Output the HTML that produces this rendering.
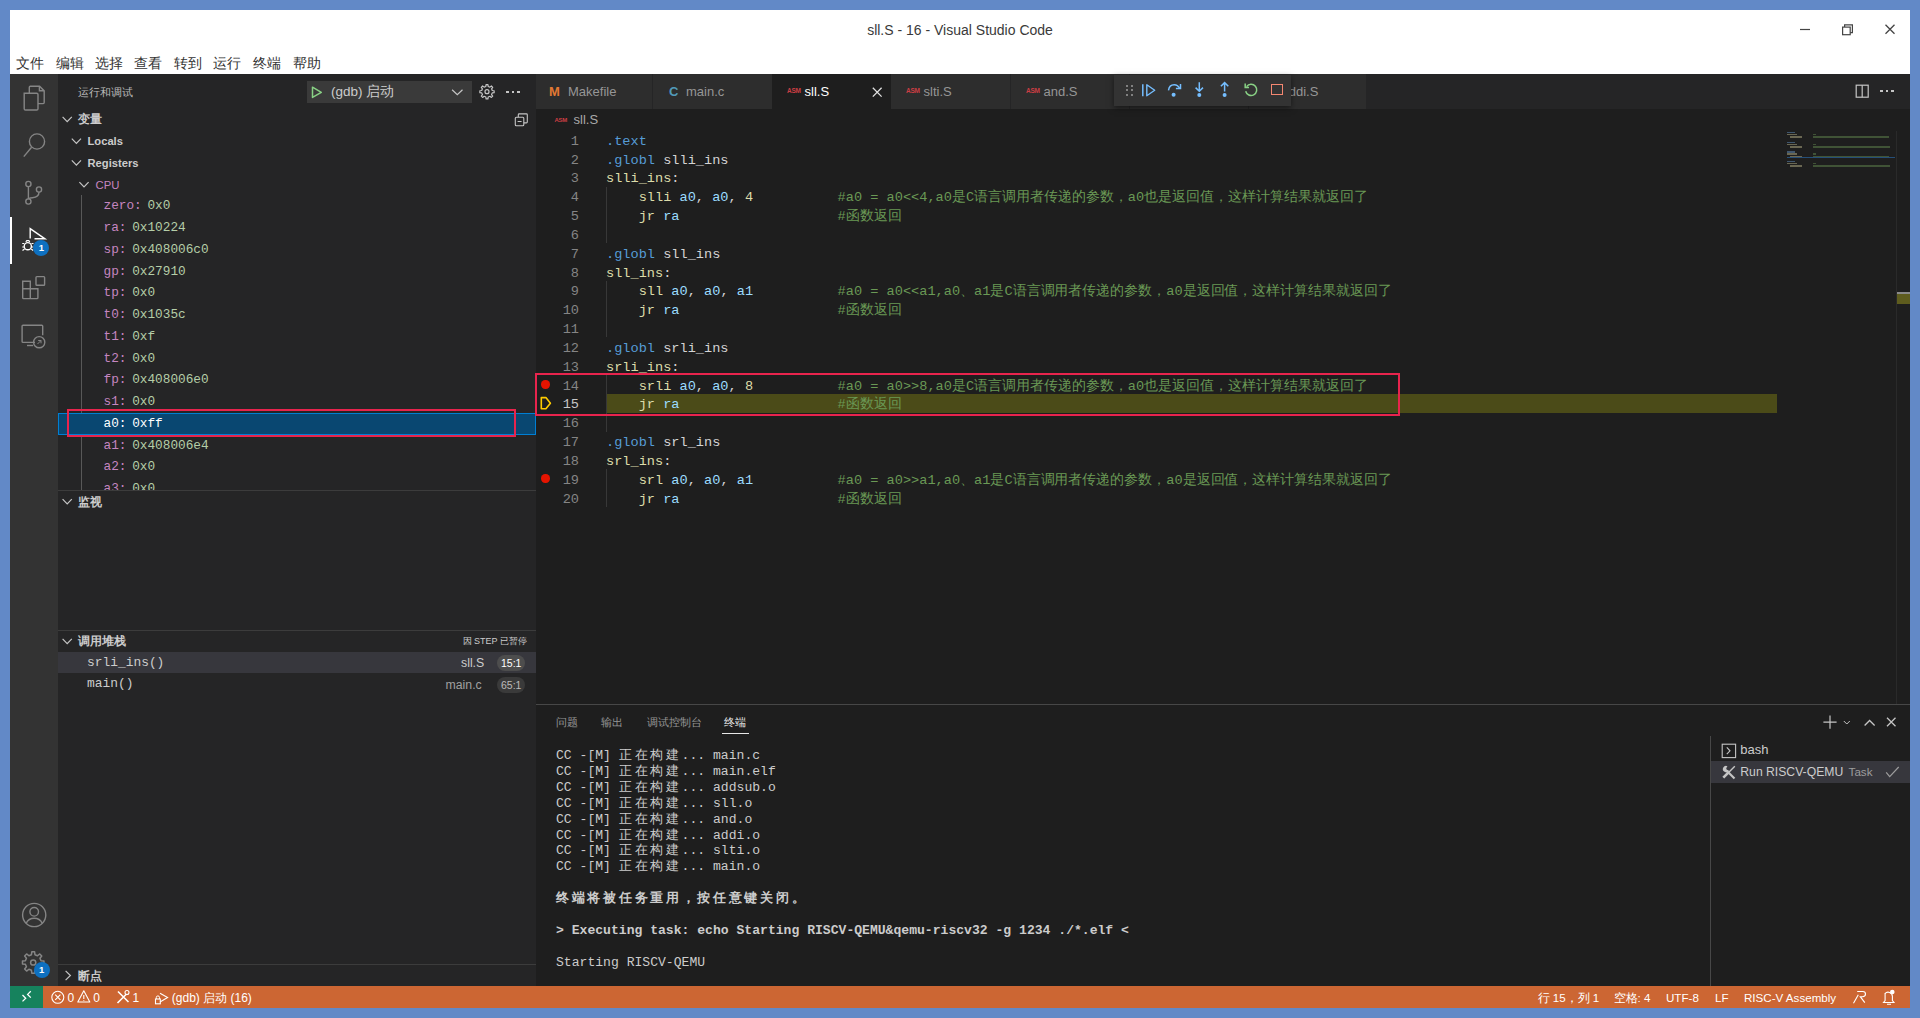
<!DOCTYPE html><html><head><meta charset="utf-8"><style>
*{margin:0;padding:0;box-sizing:border-box}
html,body{width:1920px;height:1018px;overflow:hidden;background:#6289c7;font-family:"Liberation Sans",sans-serif}
.a{position:absolute}
.t{white-space:pre;line-height:22px}
svg{position:absolute;overflow:visible}
.menu{top:54px;font-size:14px;color:#333;white-space:pre;line-height:18px}
</style></head><body>
<div class="a" style="left:10px;top:10px;width:1900px;height:64px;background:#fff"></div>
<div class="a t" style="left:10px;top:19px;width:1900px;text-align:center;font-size:14px;color:#3a3a3a">sll.S - 16 - Visual Studio Code</div>
<div class="a menu" style="left:16px">文件</div>
<div class="a menu" style="left:56px">编辑</div>
<div class="a menu" style="left:95px">选择</div>
<div class="a menu" style="left:134px">查看</div>
<div class="a menu" style="left:174px">转到</div>
<div class="a menu" style="left:213px">运行</div>
<div class="a menu" style="left:253px">终端</div>
<div class="a menu" style="left:293px">帮助</div>
<svg style="left:1800px;top:24px" width="14" height="14"><line x1="0" y1="5.5" x2="10" y2="5.5" stroke="#444" stroke-width="1.2"/></svg>
<svg style="left:1842px;top:24px" width="14" height="14"><rect x="0.6" y="3.1" width="7.6" height="7.6" fill="none" stroke="#444" stroke-width="1.2"/><path d="M2.6 3.1V0.9H10.4V8.7H8.2" fill="none" stroke="#444" stroke-width="1.2"/></svg>
<svg style="left:1885px;top:24px" width="14" height="14"><path d="M0.5 0.8L9.5 9.8M9.5 0.8L0.5 9.8" stroke="#444" stroke-width="1.3"/></svg>
<div class="a" style="left:10px;top:74px;width:48px;height:912px;background:#333333"></div>
<div class="a" style="left:58px;top:74px;width:478px;height:912px;background:#252526"></div>
<div class="a" style="left:536px;top:74px;width:1374px;height:912px;background:#1e1e1e"></div>
<svg style="left:0;top:0" width="1" height="1"><path d="M24.2 93.2h12.5c0.8 0 1.3 0.5 1.3 1.3v14.2c0 0.8-0.5 1.3-1.3 1.3h-11.2c-0.8 0-1.3-0.5-1.3-1.3z" fill="none" stroke="#858585" stroke-width="1.4"/><path d="M29.3 93.2v-5.9c0-0.6 0.4-1 1-1h9.3l4.6 4.6v11.7c0 0.6-0.4 1-1 1h-5.2" fill="none" stroke="#858585" stroke-width="1.4"/><path d="M39.4 86.5v4.3h4.6" fill="none" stroke="#858585" stroke-width="1.4"/></svg>
<svg style="left:0;top:0" width="1" height="1"><circle cx="37" cy="141.5" r="7.6" fill="none" stroke="#858585" stroke-width="1.4" stroke-width="1.6"/><path d="M31.6 147.2L23.8 156.6" fill="none" stroke="#858585" stroke-width="1.4" stroke-width="1.7"/></svg>
<svg style="left:0;top:0" width="1" height="1"><circle cx="28.4" cy="184" r="2.6" fill="none" stroke="#858585" stroke-width="1.4"/><circle cx="28.4" cy="201.5" r="2.6" fill="none" stroke="#858585" stroke-width="1.4"/><circle cx="39" cy="189.5" r="2.6" fill="none" stroke="#858585" stroke-width="1.4"/><path d="M28.4 186.6v12.3M39 192.1c0 4-3 5.3-6.5 5.6c-2.6 0.2-4.1 0.8-4.1 1.6" fill="none" stroke="#858585" stroke-width="1.4"/></svg>
<div class="a" style="left:10px;top:217px;width:2px;height:47px;background:#fff"></div>
<svg style="left:0;top:0" width="1" height="1"><path d="M30.2 238.5V228.6L45 238.8H34.5" fill="none" stroke="#fff" stroke-width="1.4"/><circle cx="27.8" cy="246.2" r="3.6" fill="none" stroke="#fff" stroke-width="1.4"/><path d="M22.2 243.5h2M22.2 247h2M22.5 250.5l2-1.5M31.5 243.5h2M31.4 247h2M33.2 250.5l-2-1.5M25.8 241.8l1-1.2h2l1 1.2" fill="none" stroke="#fff" stroke-width="1.2"/></svg>
<div class="a" style="left:33.4px;top:240px;width:16px;height:16px;border-radius:8px;background:#0e70c0;color:#fff;font-size:9.5px;font-weight:bold;text-align:center;line-height:16px">1</div>
<svg style="left:0;top:0" width="1" height="1"><path d="M22.7 281.2h7.6v7.6h7.6v8.9c0 0.5-0.4 0.9-0.9 0.9h-13.4c-0.5 0-0.9-0.4-0.9-0.9z M22.7 288.8h7.6v9.7" fill="none" stroke="#858585" stroke-width="1.4"/><rect x="36" y="276.6" width="8.6" height="8.6" rx="0.8" fill="none" stroke="#858585" stroke-width="1.4"/></svg>
<svg style="left:0;top:0" width="1" height="1"><path d="M35 342.4h-12c-0.5 0-0.9-0.4-0.9-0.9v-15.4c0-0.5 0.4-0.9 0.9-0.9h18.8c0.5 0 0.9 0.4 0.9 0.9v9.2" fill="none" stroke="#858585" stroke-width="1.4"/><path d="M27 345.5h6" fill="none" stroke="#858585" stroke-width="1.4"/><circle cx="39.2" cy="342.2" r="5.6" fill="none" stroke="#858585" stroke-width="1.4"/><path d="M37.5 344l3.5-3.5M38.2 340.5h2.8v2.8" fill="none" stroke="#858585" stroke-width="1"/></svg>
<svg style="left:0;top:0" width="1" height="1"><circle cx="34.2" cy="915" r="11.6" fill="none" stroke="#858585" stroke-width="1.4" stroke-width="1.5"/><circle cx="34.2" cy="911.8" r="4.3" fill="none" stroke="#858585" stroke-width="1.4" stroke-width="1.5"/><path d="M26.2 923.3c1.5-3.2 4.4-5 8-5s6.5 1.8 8 5" fill="none" stroke="#858585" stroke-width="1.4" stroke-width="1.5"/></svg>
<svg style="left:0;top:0" width="1" height="1"><path d="M41.01 960.75 L43.91 961.10 L43.91 963.90 L41.01 964.25 L39.96 966.79 L41.76 969.08 L39.78 971.06 L37.49 969.26 L34.95 970.31 L34.60 973.21 L31.80 973.21 L31.45 970.31 L28.91 969.26 L26.62 971.06 L24.64 969.08 L26.44 966.79 L25.39 964.25 L22.49 963.90 L22.49 961.10 L25.39 960.75 L26.44 958.21 L24.64 955.92 L26.62 953.94 L28.91 955.74 L31.45 954.69 L31.80 951.79 L34.60 951.79 L34.95 954.69 L37.49 955.74 L39.78 953.94 L41.76 955.92 L39.96 958.21Z" fill="none" stroke="#858585" stroke-width="1.5" stroke-linejoin="round"/><circle cx="33.2" cy="962.5" r="2.6" fill="none" stroke="#858585" stroke-width="1.5"/></svg>
<div class="a" style="left:33.6px;top:962px;width:16px;height:16px;border-radius:8px;background:#0e70c0;color:#fff;font-size:9.5px;font-weight:bold;text-align:center;line-height:16px">1</div>
<div class="a t" style="left:78px;top:80.5px;font-size:11px;color:#bbbbbb;font-weight:normal;font-family:'Liberation Sans';">运行和调试</div>
<div class="a" style="left:307px;top:81px;width:165px;height:21.5px;background:#3a3a3a"></div>
<svg style="left:0;top:0" width="1" height="1"><path d="M312.5 87.2V97.4L321.3 92.3Z" fill="none" stroke="#89d185" stroke-width="1.5" stroke-linejoin="round"/></svg>
<div class="a t" style="left:331px;top:81px;font-size:13.5px;color:#cccccc;font-weight:normal;font-family:'Liberation Sans';">(gdb) 启动</div>
<svg style="left:0;top:0" width="1" height="1"><path d="M452.1 89.8L457.3 94.6L462.5 89.8" fill="none" stroke="#c5c5c5" stroke-width="1.2"/></svg>
<svg style="left:0;top:0" width="1" height="1"><path d="M492.27 90.52 L494.14 90.77 L494.14 92.63 L492.27 92.88 L491.56 94.59 L492.71 96.09 L491.39 97.41 L489.89 96.26 L488.18 96.97 L487.93 98.84 L486.07 98.84 L485.82 96.97 L484.11 96.26 L482.61 97.41 L481.29 96.09 L482.44 94.59 L481.73 92.88 L479.86 92.63 L479.86 90.77 L481.73 90.52 L482.44 88.81 L481.29 87.31 L482.61 85.99 L484.11 87.14 L485.82 86.43 L486.07 84.56 L487.93 84.56 L488.18 86.43 L489.89 87.14 L491.39 85.99 L492.71 87.31 L491.56 88.81Z" fill="none" stroke="#c5c5c5" stroke-width="1.2" stroke-linejoin="round"/><circle cx="487" cy="91.7" r="2.0" fill="none" stroke="#c5c5c5" stroke-width="1.2"/></svg>
<div class="a" style="left:506.4px;top:90.8px;width:2.2px;height:2.2px;background:#c5c5c5"></div>
<div class="a" style="left:511.9px;top:90.8px;width:2.2px;height:2.2px;background:#c5c5c5"></div>
<div class="a" style="left:517.4px;top:90.8px;width:2.2px;height:2.2px;background:#c5c5c5"></div>
<svg style="left:0;top:0" width="1" height="1"><path d="M62.6 116.9L67.2 121.7L71.8 116.9" fill="none" stroke="#c5c5c5" stroke-width="1.2"/></svg>
<div class="a t" style="left:77.5px;top:108.275px;font-size:11.5px;color:#cccccc;font-weight:bold;font-family:'Liberation Sans';">变量</div>
<svg style="left:0;top:0" width="1" height="1"><rect x="515.3" y="117.3" width="8.5" height="8.5" rx="1" fill="none" stroke="#c5c5c5" stroke-width="1.1"/><path d="M518.3 117.3v-2.5c0-0.5 0.4-0.9 0.9-0.9h7.2c0.5 0 0.9 0.4 0.9 0.9v7.2c0 0.5-0.4 0.9-0.9 0.9h-2.6M517.6 121.5h4" fill="none" stroke="#c5c5c5" stroke-width="1.1"/></svg>
<svg style="left:0;top:0" width="1" height="1"><path d="M71.8 138.6L76.4 143.4L81.0 138.6" fill="none" stroke="#c5c5c5" stroke-width="1.2"/></svg>
<div class="a t" style="left:87.5px;top:130.025px;font-size:11.2px;color:#cccccc;font-weight:bold;font-family:'Liberation Sans';">Locals</div>
<svg style="left:0;top:0" width="1" height="1"><path d="M71.8 160.4L76.4 165.2L81.0 160.4" fill="none" stroke="#c5c5c5" stroke-width="1.2"/></svg>
<div class="a t" style="left:87.5px;top:151.775px;font-size:11.2px;color:#cccccc;font-weight:bold;font-family:'Liberation Sans';">Registers</div>
<svg style="left:0;top:0" width="1" height="1"><path d="M79.4 182.1L84.0 186.9L88.6 182.1" fill="none" stroke="#c5c5c5" stroke-width="1.2"/></svg>
<div class="a t" style="left:95.5px;top:173.525px;font-size:11.3px;color:#c586c0;font-weight:normal;font-family:'Liberation Sans';">CPU</div>
<div class="a" style="left:81px;top:195.4px;width:1px;height:294.6px;background:#585858"></div>
<div class="a" style="left:58px;top:412.9px;width:478px;height:21.8px;background:#094771;border:1px solid #007fd4"></div>
<div class="a" style="left:58px;top:195px;width:478px;height:295px;overflow:hidden">
<div class="a t" style="left:45.5px;top:0.3px;font-family:'Liberation Mono';font-size:12.75px"><span style="color:#c586c0">zero</span><span style="color:#c586c0;letter-spacing:-2px">: </span><span style="color:#b5cea8;margin-left:2px">0x0</span></div>
<div class="a t" style="left:45.5px;top:22.0px;font-family:'Liberation Mono';font-size:12.75px"><span style="color:#c586c0">ra</span><span style="color:#c586c0;letter-spacing:-2px">: </span><span style="color:#b5cea8;margin-left:2px">0x10224</span></div>
<div class="a t" style="left:45.5px;top:43.8px;font-family:'Liberation Mono';font-size:12.75px"><span style="color:#c586c0">sp</span><span style="color:#c586c0;letter-spacing:-2px">: </span><span style="color:#b5cea8;margin-left:2px">0x408006c0</span></div>
<div class="a t" style="left:45.5px;top:65.5px;font-family:'Liberation Mono';font-size:12.75px"><span style="color:#c586c0">gp</span><span style="color:#c586c0;letter-spacing:-2px">: </span><span style="color:#b5cea8;margin-left:2px">0x27910</span></div>
<div class="a t" style="left:45.5px;top:87.3px;font-family:'Liberation Mono';font-size:12.75px"><span style="color:#c586c0">tp</span><span style="color:#c586c0;letter-spacing:-2px">: </span><span style="color:#b5cea8;margin-left:2px">0x0</span></div>
<div class="a t" style="left:45.5px;top:109.0px;font-family:'Liberation Mono';font-size:12.75px"><span style="color:#c586c0">t0</span><span style="color:#c586c0;letter-spacing:-2px">: </span><span style="color:#b5cea8;margin-left:2px">0x1035c</span></div>
<div class="a t" style="left:45.5px;top:130.8px;font-family:'Liberation Mono';font-size:12.75px"><span style="color:#c586c0">t1</span><span style="color:#c586c0;letter-spacing:-2px">: </span><span style="color:#b5cea8;margin-left:2px">0xf</span></div>
<div class="a t" style="left:45.5px;top:152.5px;font-family:'Liberation Mono';font-size:12.75px"><span style="color:#c586c0">t2</span><span style="color:#c586c0;letter-spacing:-2px">: </span><span style="color:#b5cea8;margin-left:2px">0x0</span></div>
<div class="a t" style="left:45.5px;top:174.3px;font-family:'Liberation Mono';font-size:12.75px"><span style="color:#c586c0">fp</span><span style="color:#c586c0;letter-spacing:-2px">: </span><span style="color:#b5cea8;margin-left:2px">0x408006e0</span></div>
<div class="a t" style="left:45.5px;top:196.0px;font-family:'Liberation Mono';font-size:12.75px"><span style="color:#c586c0">s1</span><span style="color:#c586c0;letter-spacing:-2px">: </span><span style="color:#b5cea8;margin-left:2px">0x0</span></div>
<div class="a t" style="left:45.5px;top:217.8px;font-family:'Liberation Mono';font-size:12.75px"><span style="color:#ffffff">a0</span><span style="color:#ffffff;letter-spacing:-2px">: </span><span style="color:#ffffff;margin-left:2px">0xff</span></div>
<div class="a t" style="left:45.5px;top:239.5px;font-family:'Liberation Mono';font-size:12.75px"><span style="color:#c586c0">a1</span><span style="color:#c586c0;letter-spacing:-2px">: </span><span style="color:#b5cea8;margin-left:2px">0x408006e4</span></div>
<div class="a t" style="left:45.5px;top:261.3px;font-family:'Liberation Mono';font-size:12.75px"><span style="color:#c586c0">a2</span><span style="color:#c586c0;letter-spacing:-2px">: </span><span style="color:#b5cea8;margin-left:2px">0x0</span></div>
<div class="a t" style="left:45.5px;top:283.0px;font-family:'Liberation Mono';font-size:12.75px"><span style="color:#c586c0">a3</span><span style="color:#c586c0;letter-spacing:-2px">: </span><span style="color:#b5cea8;margin-left:2px">0x0</span></div>
</div>
<div class="a" style="left:58px;top:490px;width:478px;height:1px;background:#3c3c3c"></div>
<svg style="left:0;top:0" width="1" height="1"><path d="M62.6 499.1L67.2 503.9L71.8 499.1" fill="none" stroke="#c5c5c5" stroke-width="1.2"/></svg>
<div class="a t" style="left:77.5px;top:490.5px;font-size:11.5px;color:#cccccc;font-weight:bold;font-family:'Liberation Sans';">监视</div>
<div class="a" style="left:58px;top:630px;width:478px;height:1px;background:#3c3c3c"></div>
<svg style="left:0;top:0" width="1" height="1"><path d="M62.6 638.9L67.2 643.7L71.8 638.9" fill="none" stroke="#c5c5c5" stroke-width="1.2"/></svg>
<div class="a t" style="left:77.5px;top:630.3px;font-size:11.5px;color:#cccccc;font-weight:bold;font-family:'Liberation Sans';">调用堆栈</div>
<div class="a t" style="left:462.5px;top:630.3px;font-size:9.0px;color:#cccccc;font-weight:normal;font-family:'Liberation Sans';">因 STEP 已暂停</div>
<div class="a" style="left:58px;top:652.3px;width:478px;height:21px;background:#37373d"></div>
<div class="a t" style="left:87px;top:651.5px;font-size:12.9px;color:#cccccc;font-weight:normal;font-family:'Liberation Mono';">srli_ins()</div>
<div class="a t" style="left:461px;top:652px;font-size:12.3px;color:#cccccc;font-weight:normal;font-family:'Liberation Sans';">sll.S</div>
<div class="a" style="left:497px;top:655.4px;width:27.6px;height:16px;border-radius:8px;background:#4d4d4d"></div>
<div class="a t" style="left:501px;top:652.4px;font-size:10.5px;color:#ffffff;font-weight:normal;font-family:'Liberation Sans';">15:1</div>
<div class="a t" style="left:87px;top:673px;font-size:12.9px;color:#cccccc;font-weight:normal;font-family:'Liberation Mono';">main()</div>
<div class="a t" style="left:445.5px;top:674px;font-size:12.3px;color:#a0a0a0;font-weight:normal;font-family:'Liberation Sans';">main.c</div>
<div class="a" style="left:497px;top:677.4px;width:27.6px;height:16px;border-radius:8px;background:#3a3a3a"></div>
<div class="a t" style="left:501px;top:674.4px;font-size:10.5px;color:#bbbbbb;font-weight:normal;font-family:'Liberation Sans';">65:1</div>
<div class="a" style="left:58px;top:964px;width:478px;height:1px;background:#3c3c3c"></div>
<svg style="left:0;top:0" width="1" height="1"><path d="M65.6 970.9L70.4 975.5L65.6 980.1" fill="none" stroke="#c5c5c5" stroke-width="1.2"/></svg>
<div class="a t" style="left:77.5px;top:964.5px;font-size:11.5px;color:#cccccc;font-weight:bold;font-family:'Liberation Sans';">断点</div>
<div class="a" style="left:67px;top:408.5px;width:448.5px;height:28.5px;border:2.6px solid #e8244d"></div>
<div class="a" style="left:536px;top:74px;width:1374px;height:35px;background:#252526"></div>
<div class="a" style="left:536px;top:74px;width:116px;height:35px;background:#2d2d2d"></div>
<div class="a t" style="left:549px;top:81px;font-size:13px;font-weight:bold;color:#e37933">M</div>
<div class="a t" style="left:568px;top:81px;font-size:13px;color:#969696;font-weight:normal;font-family:'Liberation Sans';">Makefile</div>
<div class="a" style="left:653px;top:74px;width:119px;height:35px;background:#2d2d2d"></div>
<div class="a t" style="left:669px;top:80.5px;font-size:13px;font-weight:bold;color:#519aba">C</div>
<div class="a t" style="left:686px;top:81px;font-size:13px;color:#969696;font-weight:normal;font-family:'Liberation Sans';">main.c</div>
<div class="a" style="left:772px;top:74px;width:119px;height:35px;background:#1e1e1e"></div>
<div class="a t" style="left:787px;top:80px;font-size:6.5px;font-weight:bold;color:#cc3e44;letter-spacing:-0.3px">ASM</div>
<div class="a t" style="left:804.5px;top:81px;font-size:13px;color:#ffffff;font-weight:normal;font-family:'Liberation Sans';">sll.S</div>
<div class="a" style="left:891px;top:74px;width:119px;height:35px;background:#2d2d2d"></div>
<div class="a t" style="left:906px;top:80px;font-size:6.5px;font-weight:bold;color:#cc3e44;letter-spacing:-0.3px">ASM</div>
<div class="a t" style="left:923.5px;top:81px;font-size:13px;color:#969696;font-weight:normal;font-family:'Liberation Sans';">slti.S</div>
<div class="a" style="left:1011px;top:74px;width:118px;height:35px;background:#2d2d2d"></div>
<div class="a t" style="left:1026px;top:80px;font-size:6.5px;font-weight:bold;color:#cc3e44;letter-spacing:-0.3px">ASM</div>
<div class="a t" style="left:1043.5px;top:81px;font-size:13px;color:#969696;font-weight:normal;font-family:'Liberation Sans';">and.S</div>
<div class="a" style="left:1130px;top:74px;width:118px;height:35px;background:#2d2d2d"></div>
<div class="a t" style="left:1145px;top:80px;font-size:6.5px;font-weight:bold;color:#cc3e44;letter-spacing:-0.3px">ASM</div>
<div class="a t" style="left:1162.5px;top:81px;font-size:13px;color:#969696;font-weight:normal;font-family:'Liberation Sans';">xx</div>
<div class="a" style="left:1249px;top:74px;width:117px;height:35px;background:#2d2d2d"></div>
<div class="a t" style="left:1264px;top:80px;font-size:6.5px;font-weight:bold;color:#cc3e44;letter-spacing:-0.3px">ASM</div>
<div class="a t" style="left:1281.5px;top:81px;font-size:13px;color:#969696;font-weight:normal;font-family:'Liberation Sans';">addi.S</div>
<svg style="left:0;top:0" width="1" height="1"><path d="M872.8 87.8L881.6 96.6M881.6 87.8L872.8 96.6" stroke="#e0e0e0" stroke-width="1.3"/></svg>
<div class="a" style="left:1114px;top:75px;width:177px;height:31px;background:#333333;box-shadow:0 2px 6px rgba(0,0,0,0.5)"></div>
<div class="a" style="left:1125.8px;top:84.5px;width:2px;height:2px;background:#9d9d9d;border-radius:1px"></div>
<div class="a" style="left:1125.8px;top:89px;width:2px;height:2px;background:#9d9d9d;border-radius:1px"></div>
<div class="a" style="left:1125.8px;top:93.5px;width:2px;height:2px;background:#9d9d9d;border-radius:1px"></div>
<div class="a" style="left:1130.8px;top:84.5px;width:2px;height:2px;background:#9d9d9d;border-radius:1px"></div>
<div class="a" style="left:1130.8px;top:89px;width:2px;height:2px;background:#9d9d9d;border-radius:1px"></div>
<div class="a" style="left:1130.8px;top:93.5px;width:2px;height:2px;background:#9d9d9d;border-radius:1px"></div>
<svg style="left:0;top:0" width="1" height="1"><path d="M1142.8 84.3V96.3" stroke="#75beff" stroke-width="1.5"/><path d="M1146.8 84.8V95.8L1154.7 90.3Z" fill="none" stroke="#75beff" stroke-width="1.4" stroke-linejoin="round"/></svg>
<svg style="left:0;top:0" width="1" height="1"><path d="M1168.5 90.3c0.5-3.8 2.8-5.6 5.7-5.6c2.7 0 4.3 1.4 5.3 3.4" fill="none" stroke="#75beff" stroke-width="1.5"/><path d="M1180.5 84v4.6h-4.6" fill="none" stroke="#75beff" stroke-width="1.5"/><circle cx="1173.6" cy="94.8" r="2" fill="#75beff"/></svg>
<svg style="left:0;top:0" width="1" height="1"><path d="M1199.3 82.3V91.2M1195.6 87.6l3.7 3.7l3.7-3.7" fill="none" stroke="#75beff" stroke-width="1.5"/><circle cx="1199.3" cy="95" r="2" fill="#75beff"/></svg>
<svg style="left:0;top:0" width="1" height="1"><path d="M1224.6 91.5V82.6M1220.9 86.3l3.7-3.7l3.7 3.7" fill="none" stroke="#75beff" stroke-width="1.5"/><circle cx="1224.6" cy="95" r="2" fill="#75beff"/></svg>
<svg style="left:0;top:0" width="1" height="1"><path d="M1246.6 86.6a5.6 5.6 0 1 1-0.9 4.6" fill="none" stroke="#89d185" stroke-width="1.5"/><path d="M1245.2 83.6v3.8h3.8" fill="none" stroke="#89d185" stroke-width="1.5"/></svg>
<div class="a" style="left:1271.3px;top:84.3px;width:11.6px;height:11px;border:1.5px solid #f48771"></div>
<svg style="left:0;top:0" width="1" height="1"><rect x="1856.2" y="85.2" width="12" height="12" fill="none" stroke="#c5c5c5" stroke-width="1.2"/><path d="M1862.2 85.2v12" stroke="#c5c5c5" stroke-width="1.2"/></svg>
<div class="a" style="left:1880.4px;top:90px;width:2.2px;height:2.2px;background:#c5c5c5"></div>
<div class="a" style="left:1885.9px;top:90px;width:2.2px;height:2.2px;background:#c5c5c5"></div>
<div class="a" style="left:1891.4px;top:90px;width:2.2px;height:2.2px;background:#c5c5c5"></div>
<div class="a t" style="left:554.5px;top:108.5px;font-size:6px;font-weight:bold;color:#cc3e44;letter-spacing:-0.3px">ASM</div>
<div class="a t" style="left:573.5px;top:109px;font-size:13px;color:#a9a9a9;font-weight:normal;font-family:'Liberation Sans';">sll.S</div>
<div class="a" style="left:606px;top:393.8px;width:1171px;height:18.8px;background:#4b4b18"></div>
<div class="a" style="left:606px;top:186.7px;width:1px;height:56.5px;background:#383838"></div>
<div class="a" style="left:606px;top:280.8px;width:1px;height:56.5px;background:#383838"></div>
<div class="a" style="left:606px;top:375.0px;width:1px;height:56.5px;background:#383838"></div>
<div class="a" style="left:606px;top:469.1px;width:1px;height:37.7px;background:#383838"></div>
<div class="a" style="left:536px;top:132.35px;width:1240px;height:400px;font-family:'Liberation Mono';font-size:13.62px">
<div class="a t" style="left:3px;width:40px;text-align:right;top:-1.6px;color:#858585">1</div>
<div class="a t" style="left:70.0px;top:-1.6px;color:#d4d4d4"><span style="color:#569cd6">.text</span></div>
<div class="a t" style="left:3px;width:40px;text-align:right;top:17.2px;color:#858585">2</div>
<div class="a t" style="left:70.0px;top:17.2px;color:#d4d4d4"><span style="color:#569cd6">.globl</span><span style="color:#d4d4d4"> slli_ins</span></div>
<div class="a t" style="left:3px;width:40px;text-align:right;top:36.1px;color:#858585">3</div>
<div class="a t" style="left:70.0px;top:36.1px;color:#d4d4d4"><span style="color:#dcdcaa">slli_ins</span><span style="color:#d4d4d4">:</span></div>
<div class="a t" style="left:3px;width:40px;text-align:right;top:54.9px;color:#858585">4</div>
<div class="a t" style="left:70.0px;top:54.9px;color:#d4d4d4">    <span style="color:#dcdcaa">slli</span> <span style="color:#9cdcfe">a0</span><span style="color:#d4d4d4">, </span><span style="color:#9cdcfe">a0</span><span style="color:#d4d4d4">, </span><span style="color:#dcdcaa">4</span></div>
<div class="a t" style="left:301.6px;top:54.9px;color:#6a9955">#a0 = a0&lt;&lt;4,a0<span style="display:inline-block;width:13.98px">是</span>C<span style="display:inline-block;width:13.98px">语</span><span style="display:inline-block;width:13.98px">言</span><span style="display:inline-block;width:13.98px">调</span><span style="display:inline-block;width:13.98px">用</span><span style="display:inline-block;width:13.98px">者</span><span style="display:inline-block;width:13.98px">传</span><span style="display:inline-block;width:13.98px">递</span><span style="display:inline-block;width:13.98px">的</span><span style="display:inline-block;width:13.98px">参</span><span style="display:inline-block;width:13.98px">数</span><span style="display:inline-block;width:13.98px">，</span>a0<span style="display:inline-block;width:13.98px">也</span><span style="display:inline-block;width:13.98px">是</span><span style="display:inline-block;width:13.98px">返</span><span style="display:inline-block;width:13.98px">回</span><span style="display:inline-block;width:13.98px">值</span><span style="display:inline-block;width:13.98px">，</span><span style="display:inline-block;width:13.98px">这</span><span style="display:inline-block;width:13.98px">样</span><span style="display:inline-block;width:13.98px">计</span><span style="display:inline-block;width:13.98px">算</span><span style="display:inline-block;width:13.98px">结</span><span style="display:inline-block;width:13.98px">果</span><span style="display:inline-block;width:13.98px">就</span><span style="display:inline-block;width:13.98px">返</span><span style="display:inline-block;width:13.98px">回</span><span style="display:inline-block;width:13.98px">了</span></div>
<div class="a t" style="left:3px;width:40px;text-align:right;top:73.7px;color:#858585">5</div>
<div class="a t" style="left:70.0px;top:73.7px;color:#d4d4d4">    <span style="color:#dcdcaa">jr</span> <span style="color:#9cdcfe">ra</span></div>
<div class="a t" style="left:301.6px;top:73.7px;color:#6a9955">#<span style="display:inline-block;width:13.98px">函</span><span style="display:inline-block;width:13.98px">数</span><span style="display:inline-block;width:13.98px">返</span><span style="display:inline-block;width:13.98px">回</span></div>
<div class="a t" style="left:3px;width:40px;text-align:right;top:92.6px;color:#858585">6</div>
<div class="a t" style="left:3px;width:40px;text-align:right;top:111.4px;color:#858585">7</div>
<div class="a t" style="left:70.0px;top:111.4px;color:#d4d4d4"><span style="color:#569cd6">.globl</span><span style="color:#d4d4d4"> sll_ins</span></div>
<div class="a t" style="left:3px;width:40px;text-align:right;top:130.2px;color:#858585">8</div>
<div class="a t" style="left:70.0px;top:130.2px;color:#d4d4d4"><span style="color:#dcdcaa">sll_ins</span><span style="color:#d4d4d4">:</span></div>
<div class="a t" style="left:3px;width:40px;text-align:right;top:149.1px;color:#858585">9</div>
<div class="a t" style="left:70.0px;top:149.1px;color:#d4d4d4">    <span style="color:#dcdcaa">sll</span> <span style="color:#9cdcfe">a0</span><span style="color:#d4d4d4">, </span><span style="color:#9cdcfe">a0</span><span style="color:#d4d4d4">, </span><span style="color:#9cdcfe">a1</span></div>
<div class="a t" style="left:301.6px;top:149.1px;color:#6a9955">#a0 = a0&lt;&lt;a1,a0<span style="display:inline-block;width:13.98px">、</span>a1<span style="display:inline-block;width:13.98px">是</span>C<span style="display:inline-block;width:13.98px">语</span><span style="display:inline-block;width:13.98px">言</span><span style="display:inline-block;width:13.98px">调</span><span style="display:inline-block;width:13.98px">用</span><span style="display:inline-block;width:13.98px">者</span><span style="display:inline-block;width:13.98px">传</span><span style="display:inline-block;width:13.98px">递</span><span style="display:inline-block;width:13.98px">的</span><span style="display:inline-block;width:13.98px">参</span><span style="display:inline-block;width:13.98px">数</span><span style="display:inline-block;width:13.98px">，</span>a0<span style="display:inline-block;width:13.98px">是</span><span style="display:inline-block;width:13.98px">返</span><span style="display:inline-block;width:13.98px">回</span><span style="display:inline-block;width:13.98px">值</span><span style="display:inline-block;width:13.98px">，</span><span style="display:inline-block;width:13.98px">这</span><span style="display:inline-block;width:13.98px">样</span><span style="display:inline-block;width:13.98px">计</span><span style="display:inline-block;width:13.98px">算</span><span style="display:inline-block;width:13.98px">结</span><span style="display:inline-block;width:13.98px">果</span><span style="display:inline-block;width:13.98px">就</span><span style="display:inline-block;width:13.98px">返</span><span style="display:inline-block;width:13.98px">回</span><span style="display:inline-block;width:13.98px">了</span></div>
<div class="a t" style="left:3px;width:40px;text-align:right;top:167.9px;color:#858585">10</div>
<div class="a t" style="left:70.0px;top:167.9px;color:#d4d4d4">    <span style="color:#dcdcaa">jr</span> <span style="color:#9cdcfe">ra</span></div>
<div class="a t" style="left:301.6px;top:167.9px;color:#6a9955">#<span style="display:inline-block;width:13.98px">函</span><span style="display:inline-block;width:13.98px">数</span><span style="display:inline-block;width:13.98px">返</span><span style="display:inline-block;width:13.98px">回</span></div>
<div class="a t" style="left:3px;width:40px;text-align:right;top:186.7px;color:#858585">11</div>
<div class="a t" style="left:3px;width:40px;text-align:right;top:205.5px;color:#858585">12</div>
<div class="a t" style="left:70.0px;top:205.5px;color:#d4d4d4"><span style="color:#569cd6">.globl</span><span style="color:#d4d4d4"> srli_ins</span></div>
<div class="a t" style="left:3px;width:40px;text-align:right;top:224.4px;color:#858585">13</div>
<div class="a t" style="left:70.0px;top:224.4px;color:#d4d4d4"><span style="color:#dcdcaa">srli_ins</span><span style="color:#d4d4d4">:</span></div>
<div class="a t" style="left:3px;width:40px;text-align:right;top:243.2px;color:#858585">14</div>
<div class="a t" style="left:70.0px;top:243.2px;color:#d4d4d4">    <span style="color:#dcdcaa">srli</span> <span style="color:#9cdcfe">a0</span><span style="color:#d4d4d4">, </span><span style="color:#9cdcfe">a0</span><span style="color:#d4d4d4">, </span><span style="color:#dcdcaa">8</span></div>
<div class="a t" style="left:301.6px;top:243.2px;color:#6a9955">#a0 = a0&gt;&gt;8,a0<span style="display:inline-block;width:13.98px">是</span>C<span style="display:inline-block;width:13.98px">语</span><span style="display:inline-block;width:13.98px">言</span><span style="display:inline-block;width:13.98px">调</span><span style="display:inline-block;width:13.98px">用</span><span style="display:inline-block;width:13.98px">者</span><span style="display:inline-block;width:13.98px">传</span><span style="display:inline-block;width:13.98px">递</span><span style="display:inline-block;width:13.98px">的</span><span style="display:inline-block;width:13.98px">参</span><span style="display:inline-block;width:13.98px">数</span><span style="display:inline-block;width:13.98px">，</span>a0<span style="display:inline-block;width:13.98px">也</span><span style="display:inline-block;width:13.98px">是</span><span style="display:inline-block;width:13.98px">返</span><span style="display:inline-block;width:13.98px">回</span><span style="display:inline-block;width:13.98px">值</span><span style="display:inline-block;width:13.98px">，</span><span style="display:inline-block;width:13.98px">这</span><span style="display:inline-block;width:13.98px">样</span><span style="display:inline-block;width:13.98px">计</span><span style="display:inline-block;width:13.98px">算</span><span style="display:inline-block;width:13.98px">结</span><span style="display:inline-block;width:13.98px">果</span><span style="display:inline-block;width:13.98px">就</span><span style="display:inline-block;width:13.98px">返</span><span style="display:inline-block;width:13.98px">回</span><span style="display:inline-block;width:13.98px">了</span></div>
<div class="a t" style="left:3px;width:40px;text-align:right;top:262.0px;color:#c6c6c6">15</div>
<div class="a t" style="left:70.0px;top:262.0px;color:#d4d4d4">    <span style="color:#dcdcaa">jr</span> <span style="color:#9cdcfe">ra</span></div>
<div class="a t" style="left:301.6px;top:262.0px;color:#6a9955">#<span style="display:inline-block;width:13.98px">函</span><span style="display:inline-block;width:13.98px">数</span><span style="display:inline-block;width:13.98px">返</span><span style="display:inline-block;width:13.98px">回</span></div>
<div class="a t" style="left:3px;width:40px;text-align:right;top:280.9px;color:#858585">16</div>
<div class="a t" style="left:3px;width:40px;text-align:right;top:299.7px;color:#858585">17</div>
<div class="a t" style="left:70.0px;top:299.7px;color:#d4d4d4"><span style="color:#569cd6">.globl</span><span style="color:#d4d4d4"> srl_ins</span></div>
<div class="a t" style="left:3px;width:40px;text-align:right;top:318.5px;color:#858585">18</div>
<div class="a t" style="left:70.0px;top:318.5px;color:#d4d4d4"><span style="color:#dcdcaa">srl_ins</span><span style="color:#d4d4d4">:</span></div>
<div class="a t" style="left:3px;width:40px;text-align:right;top:337.4px;color:#858585">19</div>
<div class="a t" style="left:70.0px;top:337.4px;color:#d4d4d4">    <span style="color:#dcdcaa">srl</span> <span style="color:#9cdcfe">a0</span><span style="color:#d4d4d4">, </span><span style="color:#9cdcfe">a0</span><span style="color:#d4d4d4">, </span><span style="color:#9cdcfe">a1</span></div>
<div class="a t" style="left:301.6px;top:337.4px;color:#6a9955">#a0 = a0&gt;&gt;a1,a0<span style="display:inline-block;width:13.98px">、</span>a1<span style="display:inline-block;width:13.98px">是</span>C<span style="display:inline-block;width:13.98px">语</span><span style="display:inline-block;width:13.98px">言</span><span style="display:inline-block;width:13.98px">调</span><span style="display:inline-block;width:13.98px">用</span><span style="display:inline-block;width:13.98px">者</span><span style="display:inline-block;width:13.98px">传</span><span style="display:inline-block;width:13.98px">递</span><span style="display:inline-block;width:13.98px">的</span><span style="display:inline-block;width:13.98px">参</span><span style="display:inline-block;width:13.98px">数</span><span style="display:inline-block;width:13.98px">，</span>a0<span style="display:inline-block;width:13.98px">是</span><span style="display:inline-block;width:13.98px">返</span><span style="display:inline-block;width:13.98px">回</span><span style="display:inline-block;width:13.98px">值</span><span style="display:inline-block;width:13.98px">，</span><span style="display:inline-block;width:13.98px">这</span><span style="display:inline-block;width:13.98px">样</span><span style="display:inline-block;width:13.98px">计</span><span style="display:inline-block;width:13.98px">算</span><span style="display:inline-block;width:13.98px">结</span><span style="display:inline-block;width:13.98px">果</span><span style="display:inline-block;width:13.98px">就</span><span style="display:inline-block;width:13.98px">返</span><span style="display:inline-block;width:13.98px">回</span><span style="display:inline-block;width:13.98px">了</span></div>
<div class="a t" style="left:3px;width:40px;text-align:right;top:356.2px;color:#858585">20</div>
<div class="a t" style="left:70.0px;top:356.2px;color:#d4d4d4">    <span style="color:#dcdcaa">jr</span> <span style="color:#9cdcfe">ra</span></div>
<div class="a t" style="left:301.6px;top:356.2px;color:#6a9955">#<span style="display:inline-block;width:13.98px">函</span><span style="display:inline-block;width:13.98px">数</span><span style="display:inline-block;width:13.98px">返</span><span style="display:inline-block;width:13.98px">回</span></div>
</div>
<div class="a" style="left:541.2px;top:380.2px;width:8.4px;height:8.4px;border-radius:50%;background:#e51400"></div>
<div class="a" style="left:541.2px;top:474.4px;width:8.4px;height:8.4px;border-radius:50%;background:#e51400"></div>
<svg style="left:0;top:0" width="1" height="1"><path d="M541.3 397.6h4.6l4.5 5.6l-4.5 5.6h-4.6z" fill="none" stroke="#ffcc00" stroke-width="1.6" stroke-linejoin="round"/></svg>
<div class="a" style="left:535px;top:373px;width:865px;height:42.6px;border:2.6px solid #e8244d"></div>
<div class="a" style="left:1777px;top:109px;width:133px;height:595px;background:#1e1e1e"></div>
<div class="a" style="left:1787px;top:131.5px;width:8px;height:1.5px;background:#5d86b2;opacity:0.55"></div>
<div class="a" style="left:1787px;top:133.8px;width:10px;height:1.5px;background:#a9a47d;opacity:0.55"></div>
<div class="a" style="left:1790px;top:136.1px;width:12px;height:1.5px;background:#a9a47d;opacity:0.55"></div>
<div class="a" style="left:1813px;top:136.1px;width:76px;height:1.5px;background:#5c7f4a;opacity:0.55"></div>
<div class="a" style="left:1813px;top:133.8px;width:3px;height:1.5px;background:#5c7f4a;opacity:0.55"></div>
<div class="a" style="left:1787px;top:141.5px;width:8px;height:1.5px;background:#5d86b2;opacity:0.55"></div>
<div class="a" style="left:1787px;top:143.8px;width:10px;height:1.5px;background:#a9a47d;opacity:0.55"></div>
<div class="a" style="left:1790px;top:146.1px;width:12px;height:1.5px;background:#a9a47d;opacity:0.55"></div>
<div class="a" style="left:1813px;top:146.1px;width:77px;height:1.5px;background:#5c7f4a;opacity:0.55"></div>
<div class="a" style="left:1813px;top:143.8px;width:3px;height:1.5px;background:#5c7f4a;opacity:0.55"></div>
<div class="a" style="left:1787px;top:151px;width:8px;height:1.5px;background:#5d86b2;opacity:0.55"></div>
<div class="a" style="left:1787px;top:153.3px;width:10px;height:1.5px;background:#a9a47d;opacity:0.55"></div>
<div class="a" style="left:1790px;top:155.6px;width:12px;height:1.5px;background:#a9a47d;opacity:0.55"></div>
<div class="a" style="left:1813px;top:155.6px;width:76px;height:1.5px;background:#5c7f4a;opacity:0.55"></div>
<div class="a" style="left:1813px;top:153.3px;width:3px;height:1.5px;background:#5c7f4a;opacity:0.55"></div>
<div class="a" style="left:1787px;top:160.5px;width:8px;height:1.5px;background:#5d86b2;opacity:0.55"></div>
<div class="a" style="left:1787px;top:162.8px;width:10px;height:1.5px;background:#a9a47d;opacity:0.55"></div>
<div class="a" style="left:1790px;top:165.1px;width:12px;height:1.5px;background:#a9a47d;opacity:0.55"></div>
<div class="a" style="left:1813px;top:165.1px;width:77px;height:1.5px;background:#5c7f4a;opacity:0.55"></div>
<div class="a" style="left:1813px;top:162.8px;width:3px;height:1.5px;background:#5c7f4a;opacity:0.55"></div>
<div class="a" style="left:1787px;top:157px;width:108px;height:1px;background:#264f78"></div>
<div class="a" style="left:1896px;top:131px;width:1px;height:573px;background:#2a2a2a"></div>
<div class="a" style="left:1897px;top:291.5px;width:13px;height:2px;background:#8a8a8a"></div>
<div class="a" style="left:1897px;top:293.5px;width:13px;height:10px;background:#5e5c1e"></div>
<div class="a" style="left:536px;top:704px;width:1374px;height:282px;background:#1e1e1e"></div>
<div class="a" style="left:536px;top:704px;width:1374px;height:1px;background:#474747"></div>
<div class="a t" style="left:555.5px;top:711.4px;font-size:10.6px;color:#969696;font-weight:normal;font-family:'Liberation Sans';">问题</div>
<div class="a t" style="left:600.5px;top:711.4px;font-size:10.6px;color:#969696;font-weight:normal;font-family:'Liberation Sans';">输出</div>
<div class="a t" style="left:647px;top:711.4px;font-size:10.6px;color:#969696;font-weight:normal;font-family:'Liberation Sans';">调试控制台</div>
<div class="a t" style="left:724px;top:711.4px;font-size:10.6px;color:#e7e7e7;font-weight:normal;font-family:'Liberation Sans';">终端</div>
<div class="a" style="left:722px;top:733px;width:26.5px;height:1px;background:#e7e7e7"></div>
<svg style="left:0;top:0" width="1" height="1"><path d="M1830 715.5v13.2M1823.4 722.1h13.2" stroke="#c5c5c5" stroke-width="1.2"/><path d="M1843.8 721l3 3l3-3" fill="none" stroke="#c5c5c5" stroke-width="1"/><path d="M1864.6 725.5l5-5l5 5" fill="none" stroke="#c5c5c5" stroke-width="1.3"/><path d="M1887 717.8l8.5 8.5M1895.5 717.8l-8.5 8.5" stroke="#c5c5c5" stroke-width="1.3"/></svg>
<div class="a" style="left:556.00px;top:748.0px;white-space:pre;line-height:15.9px;font-family:'Liberation Mono';font-size:13.08px;color:#cccccc;font-weight:normal">CC -[M] </div>
<div class="a" style="left:618.80px;top:748.0px;white-space:pre;line-height:15.9px;font-family:'Liberation Mono';font-size:13.08px;color:#cccccc;font-weight:normal">正</div>
<div class="a" style="left:634.50px;top:748.0px;white-space:pre;line-height:15.9px;font-family:'Liberation Mono';font-size:13.08px;color:#cccccc;font-weight:normal">在</div>
<div class="a" style="left:650.20px;top:748.0px;white-space:pre;line-height:15.9px;font-family:'Liberation Mono';font-size:13.08px;color:#cccccc;font-weight:normal">构</div>
<div class="a" style="left:665.90px;top:748.0px;white-space:pre;line-height:15.9px;font-family:'Liberation Mono';font-size:13.08px;color:#cccccc;font-weight:normal">建</div>
<div class="a" style="left:681.60px;top:748.0px;white-space:pre;line-height:15.9px;font-family:'Liberation Mono';font-size:13.08px;color:#cccccc;font-weight:normal">... main.c</div>
<div class="a" style="left:556.00px;top:763.9px;white-space:pre;line-height:15.9px;font-family:'Liberation Mono';font-size:13.08px;color:#cccccc;font-weight:normal">CC -[M] </div>
<div class="a" style="left:618.80px;top:763.9px;white-space:pre;line-height:15.9px;font-family:'Liberation Mono';font-size:13.08px;color:#cccccc;font-weight:normal">正</div>
<div class="a" style="left:634.50px;top:763.9px;white-space:pre;line-height:15.9px;font-family:'Liberation Mono';font-size:13.08px;color:#cccccc;font-weight:normal">在</div>
<div class="a" style="left:650.20px;top:763.9px;white-space:pre;line-height:15.9px;font-family:'Liberation Mono';font-size:13.08px;color:#cccccc;font-weight:normal">构</div>
<div class="a" style="left:665.90px;top:763.9px;white-space:pre;line-height:15.9px;font-family:'Liberation Mono';font-size:13.08px;color:#cccccc;font-weight:normal">建</div>
<div class="a" style="left:681.60px;top:763.9px;white-space:pre;line-height:15.9px;font-family:'Liberation Mono';font-size:13.08px;color:#cccccc;font-weight:normal">... main.elf</div>
<div class="a" style="left:556.00px;top:779.8px;white-space:pre;line-height:15.9px;font-family:'Liberation Mono';font-size:13.08px;color:#cccccc;font-weight:normal">CC -[M] </div>
<div class="a" style="left:618.80px;top:779.8px;white-space:pre;line-height:15.9px;font-family:'Liberation Mono';font-size:13.08px;color:#cccccc;font-weight:normal">正</div>
<div class="a" style="left:634.50px;top:779.8px;white-space:pre;line-height:15.9px;font-family:'Liberation Mono';font-size:13.08px;color:#cccccc;font-weight:normal">在</div>
<div class="a" style="left:650.20px;top:779.8px;white-space:pre;line-height:15.9px;font-family:'Liberation Mono';font-size:13.08px;color:#cccccc;font-weight:normal">构</div>
<div class="a" style="left:665.90px;top:779.8px;white-space:pre;line-height:15.9px;font-family:'Liberation Mono';font-size:13.08px;color:#cccccc;font-weight:normal">建</div>
<div class="a" style="left:681.60px;top:779.8px;white-space:pre;line-height:15.9px;font-family:'Liberation Mono';font-size:13.08px;color:#cccccc;font-weight:normal">... addsub.o</div>
<div class="a" style="left:556.00px;top:795.7px;white-space:pre;line-height:15.9px;font-family:'Liberation Mono';font-size:13.08px;color:#cccccc;font-weight:normal">CC -[M] </div>
<div class="a" style="left:618.80px;top:795.7px;white-space:pre;line-height:15.9px;font-family:'Liberation Mono';font-size:13.08px;color:#cccccc;font-weight:normal">正</div>
<div class="a" style="left:634.50px;top:795.7px;white-space:pre;line-height:15.9px;font-family:'Liberation Mono';font-size:13.08px;color:#cccccc;font-weight:normal">在</div>
<div class="a" style="left:650.20px;top:795.7px;white-space:pre;line-height:15.9px;font-family:'Liberation Mono';font-size:13.08px;color:#cccccc;font-weight:normal">构</div>
<div class="a" style="left:665.90px;top:795.7px;white-space:pre;line-height:15.9px;font-family:'Liberation Mono';font-size:13.08px;color:#cccccc;font-weight:normal">建</div>
<div class="a" style="left:681.60px;top:795.7px;white-space:pre;line-height:15.9px;font-family:'Liberation Mono';font-size:13.08px;color:#cccccc;font-weight:normal">... sll.o</div>
<div class="a" style="left:556.00px;top:811.6px;white-space:pre;line-height:15.9px;font-family:'Liberation Mono';font-size:13.08px;color:#cccccc;font-weight:normal">CC -[M] </div>
<div class="a" style="left:618.80px;top:811.6px;white-space:pre;line-height:15.9px;font-family:'Liberation Mono';font-size:13.08px;color:#cccccc;font-weight:normal">正</div>
<div class="a" style="left:634.50px;top:811.6px;white-space:pre;line-height:15.9px;font-family:'Liberation Mono';font-size:13.08px;color:#cccccc;font-weight:normal">在</div>
<div class="a" style="left:650.20px;top:811.6px;white-space:pre;line-height:15.9px;font-family:'Liberation Mono';font-size:13.08px;color:#cccccc;font-weight:normal">构</div>
<div class="a" style="left:665.90px;top:811.6px;white-space:pre;line-height:15.9px;font-family:'Liberation Mono';font-size:13.08px;color:#cccccc;font-weight:normal">建</div>
<div class="a" style="left:681.60px;top:811.6px;white-space:pre;line-height:15.9px;font-family:'Liberation Mono';font-size:13.08px;color:#cccccc;font-weight:normal">... and.o</div>
<div class="a" style="left:556.00px;top:827.5px;white-space:pre;line-height:15.9px;font-family:'Liberation Mono';font-size:13.08px;color:#cccccc;font-weight:normal">CC -[M] </div>
<div class="a" style="left:618.80px;top:827.5px;white-space:pre;line-height:15.9px;font-family:'Liberation Mono';font-size:13.08px;color:#cccccc;font-weight:normal">正</div>
<div class="a" style="left:634.50px;top:827.5px;white-space:pre;line-height:15.9px;font-family:'Liberation Mono';font-size:13.08px;color:#cccccc;font-weight:normal">在</div>
<div class="a" style="left:650.20px;top:827.5px;white-space:pre;line-height:15.9px;font-family:'Liberation Mono';font-size:13.08px;color:#cccccc;font-weight:normal">构</div>
<div class="a" style="left:665.90px;top:827.5px;white-space:pre;line-height:15.9px;font-family:'Liberation Mono';font-size:13.08px;color:#cccccc;font-weight:normal">建</div>
<div class="a" style="left:681.60px;top:827.5px;white-space:pre;line-height:15.9px;font-family:'Liberation Mono';font-size:13.08px;color:#cccccc;font-weight:normal">... addi.o</div>
<div class="a" style="left:556.00px;top:843.4px;white-space:pre;line-height:15.9px;font-family:'Liberation Mono';font-size:13.08px;color:#cccccc;font-weight:normal">CC -[M] </div>
<div class="a" style="left:618.80px;top:843.4px;white-space:pre;line-height:15.9px;font-family:'Liberation Mono';font-size:13.08px;color:#cccccc;font-weight:normal">正</div>
<div class="a" style="left:634.50px;top:843.4px;white-space:pre;line-height:15.9px;font-family:'Liberation Mono';font-size:13.08px;color:#cccccc;font-weight:normal">在</div>
<div class="a" style="left:650.20px;top:843.4px;white-space:pre;line-height:15.9px;font-family:'Liberation Mono';font-size:13.08px;color:#cccccc;font-weight:normal">构</div>
<div class="a" style="left:665.90px;top:843.4px;white-space:pre;line-height:15.9px;font-family:'Liberation Mono';font-size:13.08px;color:#cccccc;font-weight:normal">建</div>
<div class="a" style="left:681.60px;top:843.4px;white-space:pre;line-height:15.9px;font-family:'Liberation Mono';font-size:13.08px;color:#cccccc;font-weight:normal">... slti.o</div>
<div class="a" style="left:556.00px;top:859.3px;white-space:pre;line-height:15.9px;font-family:'Liberation Mono';font-size:13.08px;color:#cccccc;font-weight:normal">CC -[M] </div>
<div class="a" style="left:618.80px;top:859.3px;white-space:pre;line-height:15.9px;font-family:'Liberation Mono';font-size:13.08px;color:#cccccc;font-weight:normal">正</div>
<div class="a" style="left:634.50px;top:859.3px;white-space:pre;line-height:15.9px;font-family:'Liberation Mono';font-size:13.08px;color:#cccccc;font-weight:normal">在</div>
<div class="a" style="left:650.20px;top:859.3px;white-space:pre;line-height:15.9px;font-family:'Liberation Mono';font-size:13.08px;color:#cccccc;font-weight:normal">构</div>
<div class="a" style="left:665.90px;top:859.3px;white-space:pre;line-height:15.9px;font-family:'Liberation Mono';font-size:13.08px;color:#cccccc;font-weight:normal">建</div>
<div class="a" style="left:681.60px;top:859.3px;white-space:pre;line-height:15.9px;font-family:'Liberation Mono';font-size:13.08px;color:#cccccc;font-weight:normal">... main.o</div>
<div class="a" style="left:556.00px;top:891.1px;white-space:pre;line-height:15.9px;font-family:'Liberation Mono';font-size:13.08px;color:#cccccc;font-weight:bold">终</div>
<div class="a" style="left:571.70px;top:891.1px;white-space:pre;line-height:15.9px;font-family:'Liberation Mono';font-size:13.08px;color:#cccccc;font-weight:bold">端</div>
<div class="a" style="left:587.40px;top:891.1px;white-space:pre;line-height:15.9px;font-family:'Liberation Mono';font-size:13.08px;color:#cccccc;font-weight:bold">将</div>
<div class="a" style="left:603.10px;top:891.1px;white-space:pre;line-height:15.9px;font-family:'Liberation Mono';font-size:13.08px;color:#cccccc;font-weight:bold">被</div>
<div class="a" style="left:618.80px;top:891.1px;white-space:pre;line-height:15.9px;font-family:'Liberation Mono';font-size:13.08px;color:#cccccc;font-weight:bold">任</div>
<div class="a" style="left:634.50px;top:891.1px;white-space:pre;line-height:15.9px;font-family:'Liberation Mono';font-size:13.08px;color:#cccccc;font-weight:bold">务</div>
<div class="a" style="left:650.20px;top:891.1px;white-space:pre;line-height:15.9px;font-family:'Liberation Mono';font-size:13.08px;color:#cccccc;font-weight:bold">重</div>
<div class="a" style="left:665.90px;top:891.1px;white-space:pre;line-height:15.9px;font-family:'Liberation Mono';font-size:13.08px;color:#cccccc;font-weight:bold">用</div>
<div class="a" style="left:681.60px;top:891.1px;white-space:pre;line-height:15.9px;font-family:'Liberation Mono';font-size:13.08px;color:#cccccc;font-weight:bold">，</div>
<div class="a" style="left:697.30px;top:891.1px;white-space:pre;line-height:15.9px;font-family:'Liberation Mono';font-size:13.08px;color:#cccccc;font-weight:bold">按</div>
<div class="a" style="left:713.00px;top:891.1px;white-space:pre;line-height:15.9px;font-family:'Liberation Mono';font-size:13.08px;color:#cccccc;font-weight:bold">任</div>
<div class="a" style="left:728.70px;top:891.1px;white-space:pre;line-height:15.9px;font-family:'Liberation Mono';font-size:13.08px;color:#cccccc;font-weight:bold">意</div>
<div class="a" style="left:744.40px;top:891.1px;white-space:pre;line-height:15.9px;font-family:'Liberation Mono';font-size:13.08px;color:#cccccc;font-weight:bold">键</div>
<div class="a" style="left:760.10px;top:891.1px;white-space:pre;line-height:15.9px;font-family:'Liberation Mono';font-size:13.08px;color:#cccccc;font-weight:bold">关</div>
<div class="a" style="left:775.80px;top:891.1px;white-space:pre;line-height:15.9px;font-family:'Liberation Mono';font-size:13.08px;color:#cccccc;font-weight:bold">闭</div>
<div class="a" style="left:791.50px;top:891.1px;white-space:pre;line-height:15.9px;font-family:'Liberation Mono';font-size:13.08px;color:#cccccc;font-weight:bold">。</div>
<div class="a" style="left:556.00px;top:922.9px;white-space:pre;line-height:15.9px;font-family:'Liberation Mono';font-size:13.08px;color:#cccccc;font-weight:bold">&gt; Executing task: echo Starting RISCV-QEMU&amp;qemu-riscv32 -g 1234 ./*.elf &lt;</div>
<div class="a" style="left:556.00px;top:954.7px;white-space:pre;line-height:15.9px;font-family:'Liberation Mono';font-size:13.08px;color:#cccccc;font-weight:normal">Starting RISCV-QEMU</div>
<div class="a" style="left:1710px;top:736px;width:1px;height:250px;background:#474747"></div>
<svg style="left:0;top:0" width="1" height="1"><rect x="1722.2" y="744.2" width="13.4" height="13.4" fill="none" stroke="#c5c5c5" stroke-width="1.1"/><path d="M1726.8 747.4l3.2 3.4l-3.2 3.4" fill="none" stroke="#c5c5c5" stroke-width="1.1"/></svg>
<div class="a t" style="left:1740.3px;top:739.3px;font-size:13px;color:#cccccc;font-weight:normal;font-family:'Liberation Sans';">bash</div>
<div class="a" style="left:1711px;top:761px;width:199px;height:22px;background:#37373d"></div>
<svg style="left:0;top:0" width="1" height="1"><path d="M1726.5 770.5l8 8" stroke="#c5c5c5" stroke-width="2.2"/><path d="M1727.6 766.2a3.2 3.2 0 1 0 1.3 4.4l-1.9-0.6l-0.8-1.6l0.8-1.6z" fill="#c5c5c5"/><path d="M1734.8 766.2l-6.5 6.5" stroke="#c5c5c5" stroke-width="1.4"/><path d="M1728.8 772.2l-5.5 5.5" stroke="#c5c5c5" stroke-width="2.6"/></svg>
<div class="a t" style="left:1740.3px;top:761px;font-size:12.2px;color:#cccccc;font-weight:normal;font-family:'Liberation Sans';">Run RISCV-QEMU</div>
<div class="a t" style="left:1848.6px;top:761.4px;font-size:11.6px;color:#9d9d9d;font-weight:normal;font-family:'Liberation Sans';">Task</div>
<svg style="left:0;top:0" width="1" height="1"><path d="M1886.2 772.3l3.5 4.3l9-9.6" fill="none" stroke="#9d9d9d" stroke-width="1.2"/></svg>
<div class="a" style="left:10px;top:986px;width:1900px;height:22px;background:#cc6633"></div>
<div class="a" style="left:10px;top:986px;width:33.2px;height:22px;background:#16825d"></div>
<svg style="left:0;top:0" width="1" height="1"><path d="M22.5 995l3.2 3.2l-3.2 3.2M30.8 991.2l-3.2 3.2l3.2 3.2" fill="none" stroke="#fff" stroke-width="1.3"/></svg>
<svg style="left:0;top:0" width="1" height="1"><circle cx="57.8" cy="997.3" r="6" fill="none" stroke="#ffffff" stroke-width="1.1"/><path d="M55.2 994.7l5.2 5.2M60.4 994.7l-5.2 5.2" stroke="#ffffff" stroke-width="1.1"/><path d="M83.8 990.8l6 11.2h-12z" fill="none" stroke="#ffffff" stroke-width="1.1" stroke-linejoin="round"/><path d="M83.8 995v4M83.8 1000.2v0.9" stroke="#ffffff" stroke-width="1.1"/></svg>
<div class="a t" style="left:67.5px;top:986.5px;font-size:12px;color:#ffffff;font-weight:normal;font-family:'Liberation Sans';">0</div>
<div class="a t" style="left:93.3px;top:986.5px;font-size:12px;color:#ffffff;font-weight:normal;font-family:'Liberation Sans';">0</div>
<svg style="left:0;top:0" width="1" height="1"><path d="M117.5 1003l10.5-10.5M118 991.5l10.5 10.5" stroke="#ffffff" stroke-width="1.6"/><circle cx="127" cy="992.5" r="2" fill="#cc6633" stroke="#ffffff" stroke-width="1.1"/></svg>
<div class="a t" style="left:132.5px;top:986.5px;font-size:12px;color:#ffffff;font-weight:normal;font-family:'Liberation Sans';">1</div>
<svg style="left:0;top:0" width="1" height="1"><path d="M160 993.2l7.6 4.4l-7.6 4.4" fill="none" stroke="#ffffff" stroke-width="1.1"/><rect x="155.5" y="999" width="4.8" height="4.8" fill="none" stroke="#ffffff" stroke-width="1.1"/><path d="M156.3 999v-1.5a1.6 1.6 0 0 1 3.2 0v1.5" fill="none" stroke="#ffffff" stroke-width="1"/></svg>
<div class="a t" style="left:171.8px;top:986.5px;font-size:12px;color:#ffffff;font-weight:normal;font-family:'Liberation Sans';">(gdb) 启动 (16)</div>
<div class="a t" style="left:1537.5px;top:986.5px;font-size:11.6px;color:#ffffff;font-weight:normal;font-family:'Liberation Sans';">行 15，列 1</div>
<div class="a t" style="left:1613.5px;top:986.5px;font-size:11.6px;color:#ffffff;font-weight:normal;font-family:'Liberation Sans';">空格: 4</div>
<div class="a t" style="left:1666px;top:986.5px;font-size:11.6px;color:#ffffff;font-weight:normal;font-family:'Liberation Sans';">UTF-8</div>
<div class="a t" style="left:1715px;top:986.5px;font-size:11.6px;color:#ffffff;font-weight:normal;font-family:'Liberation Sans';">LF</div>
<div class="a t" style="left:1744px;top:986.5px;font-size:11.6px;color:#ffffff;font-weight:normal;font-family:'Liberation Sans';">RISC-V Assembly</div>
<svg style="left:0;top:0" width="1" height="1"><path d="M1853.5 1003.2l4.8-8.5M1857.2 991.5h5.6c1.8 0 2.7 1.2 2.7 2.6c0 1.7-1.4 2.6-3 2.6h-2.2l4.5 6" fill="none" stroke="#ffffff" stroke-width="1.1"/></svg>
<svg style="left:0;top:0" width="1" height="1"><path d="M1883.5 1002.5h10.5l-1.6-2v-4.2a4.2 4.2 0 0 0-7.5-2.5l0.2 0.2a4.2 4.2 0 0 0-0 0v6.5z M1887 1004.2h4" fill="none" stroke="#ffffff" stroke-width="1.1"/><circle cx="1892.3" cy="992" r="2.3" fill="#ffffff"/></svg>
</body></html>
